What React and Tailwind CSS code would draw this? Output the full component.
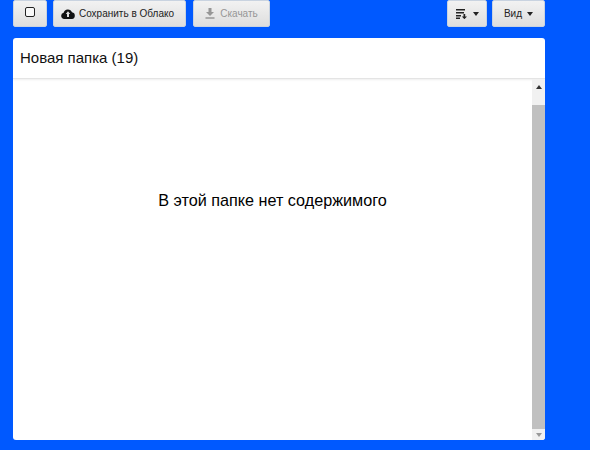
const btn = "flex items-center justify-center h-[27px] rounded-[2px] border border-[#c9d3e0] bg-gradient-to-b from-[#f2f2f2] to-[#dedede] text-[#222]";

function Caret() {
  return <span className="w-0 h-0 border-x-[3.5px] border-x-transparent border-t-[4px] border-t-[#222]" />;
}

export default function App() {
  return (
    <div className="w-[590px] h-[450px] overflow-hidden bg-[#0059ff] pl-[13px] pr-[45px] flex flex-col font-['Liberation_Sans',Arial,sans-serif]">
      <div className="flex items-center h-[27px] mb-[11px]">
        <button className={btn + " w-[34px]"}>
          <span className="w-[10px] h-[10px] mb-[3px] rounded-[2px] border border-[#222] bg-[#f8f8f8]" />
        </button>
        <button className={btn + " w-[133px] ml-[6px] gap-[4px] text-[10px] pr-[4px]"}>
          <svg width="14" height="11" viewBox="0 0 14 11" className="mb-[1px]">
            <path d="M3.2 11 a3.2 3.2 0 0 1-.6-6.3 A4.4 4.4 0 0 1 11 4.3 a3.4 3.4 0 0 1 0 6.7z" fill="#111" />
            <path d="M7 3.2 L9.2 6 H8 V9 H6 V6 H4.8z" fill="#ddd" />
          </svg>
          <span>Сохранить в Облако</span>
        </button>
        <button className={btn + " w-[77px] ml-[7px] gap-[5px] text-[10px] !text-[#969696]"}>
          <svg width="10" height="11" viewBox="0 0 10 11" className="mb-[1px]">
            <path d="M3.5 0 H6.5 V4 H9 L5 8 L1 4 H3.5z M0.5 9.3 H9.5 V10.8 H0.5z" fill="#969696" />
          </svg>
          <span>Скачать</span>
        </button>
        <button className={btn + " w-[40px] ml-auto gap-[5px] pl-[1px]"}>
          <svg width="12" height="10" viewBox="0 0 12 10">
            <path d="M0 0 H9 V1.5 H0z M0 3 H8 V4.5 H0z M0 6 H5 V7.5 H0z M0 8.5 H4 V10 H0z M7.5 5 H9.2 V7.5 H11 L8.4 10.2 L5.8 7.5 H7.5z" fill="#222" />
          </svg>
          <Caret />
        </button>
        <button className={btn + " w-[53px] ml-[5px] gap-[5px] text-[10px]"}>
          <span>Вид</span>
          <Caret />
        </button>
      </div>
      <div className="w-[532px] h-[402px] rounded-[3px] bg-white flex flex-col overflow-hidden">
        <div className="h-[41px] shrink-0 flex items-center pl-[7px] text-[15px] text-[#111] border-b border-[#e4e4e4] shadow-[0_1px_2px_#eeeeee]">
          Новая папка (19)
        </div>
        <div className="flex-1 flex min-h-0">
          <div className="flex-1 flex justify-center pt-[109px] text-[16.2px] text-black">
            В этой папке нет содержимого
          </div>
          <div className="w-[13px] flex flex-col items-center bg-[#f1f1f1]">
            <div className="h-[26px] flex items-start pt-[6px] shrink-0">
              <span className="w-0 h-0 border-x-[3.5px] border-x-transparent border-b-[4px] border-b-[#333]" />
            </div>
            <div className="flex-1 w-full bg-[#c0c0c0]" />
            <div className="h-[11px] flex items-center justify-center shrink-0">
              <span className="w-0 h-0 border-x-[3.5px] border-x-transparent border-t-[4px] border-t-[#999]" />
            </div>
          </div>
        </div>
      </div>
    </div>
  );
}
